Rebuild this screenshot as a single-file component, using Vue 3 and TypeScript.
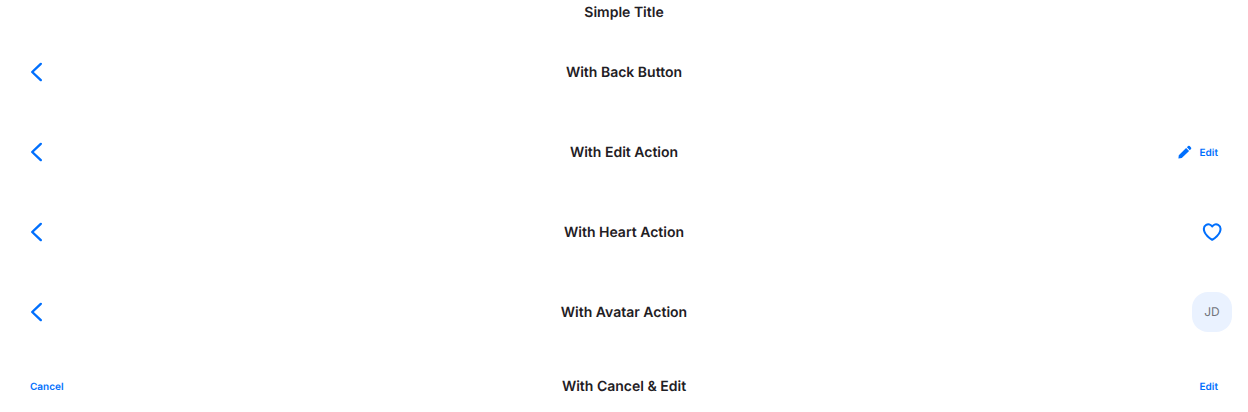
<script setup lang="ts">
type Action = 'edit' | 'heart' | 'avatar' | 'text'

interface Header {
  title: string
  left?: 'back' | 'cancel'
  right?: Action
  size: 'plain' | 'large' | 'small'
}

const headers: Header[] = [
  { title: 'Simple Title', size: 'plain' },
  { title: 'With Back Button', left: 'back', size: 'large' },
  { title: 'With Edit Action', left: 'back', right: 'edit', size: 'large' },
  { title: 'With Heart Action', left: 'back', right: 'heart', size: 'large' },
  { title: 'With Avatar Action', left: 'back', right: 'avatar', size: 'large' },
  { title: 'With Cancel & Edit', left: 'cancel', right: 'text', size: 'small' },
]
</script>

<template>
  <main class="stack">
    <header v-for="h in headers" :key="h.title" class="bar" :class="h.size">
      <div class="side">
        <button v-if="h.left === 'back'" class="icon-button" aria-label="Back">
          <svg width="20" height="20" viewBox="0 0 20 20">
            <path d="M14.800 1.900 6.200 10l8.600 8.100" fill="none" stroke="currentColor" stroke-width="2.400" stroke-linecap="round" stroke-linejoin="round" />
          </svg>
        </button>
        <button v-if="h.left === 'cancel'" class="text-button"><span class="label">Cancel</span></button>
      </div>
      <h1>{{ h.title }}</h1>
      <div class="side end">
        <button v-if="h.right === 'edit' || h.right === 'text'" class="text-button">
          <svg v-if="h.right === 'edit'" width="14" height="14" viewBox="0 0 14 14">
            <path d="M.4 13.600.8 10.200 8.100 3.100 11.100 5.900 3.800 13.100zM8.900 2.300 10.100 1.100q.8-.7 1.600 0l1.300 1.300q.7.800 0 1.600l-1.200 1.200z" fill="currentColor" />
          </svg>
          <span class="label">Edit</span>
        </button>
        <button v-if="h.right === 'heart'" class="icon-button" aria-label="Favorite">
          <svg width="20" height="20" viewBox="0 0 20 20">
            <path d="M10.200 4.500C8.700 2.200 6.100 1.800 4.200 2.900 1.900 4.200 1.500 7.200 2.500 9.800c1.200 3 4.100 5.700 7.700 8 3.600-2.300 6.500-5 7.700-8 1-2.600.6-5.600-1.700-6.900C14.300 1.800 11.700 2.200 10.200 4.500z" fill="none" stroke="currentColor" stroke-width="2" stroke-linejoin="round" />
          </svg>
        </button>
        <span v-if="h.right === 'avatar'" class="avatar">JD</span>
      </div>
    </header>
  </main>
</template>

<style>
body {
  margin: 0;
  background: #fff;
}
</style>

<style scoped>
.stack {
  display: flex;
  flex-direction: column;
  font-family: Inter, sans-serif;
  text-rendering: geometricPrecision;
}
.bar {
  display: grid;
  grid-template-columns: 1fr auto 1fr;
  align-items: center;
  box-sizing: border-box;
  padding: 0 16px;
}
.plain { height: 24px; margin-bottom: 8px; }
.large { height: 80px; }
.small { height: 68px; }
h1 {
  margin: 0;
  font-size: 14px;
  line-height: 24px;
  font-weight: 600;
  color: #1f2024;
  transform: translateY(1px);
}
.side { display: flex; align-items: center; }
.end { justify-content: flex-end; }
button {
  display: flex;
  align-items: center;
  justify-content: center;
  margin: 0;
  border: 0;
  background: none;
  color: #006ffd;
  font-family: inherit;
  text-rendering: inherit;
}
.icon-button { width: 40px; height: 40px; padding: 0; }
.text-button {
  height: 40px;
  padding: 0 14px;
  gap: 8px;
  font-size: 10px;
  font-weight: 600;
}
.label { transform: translateY(1px); }
.avatar {
  display: flex;
  align-items: center;
  justify-content: center;
  width: 40px;
  height: 40px;
  border-radius: 16px;
  background: #eaf2ff;
  color: #71727a;
  font-size: 12px;
  line-height: 16px;
}
</style>
